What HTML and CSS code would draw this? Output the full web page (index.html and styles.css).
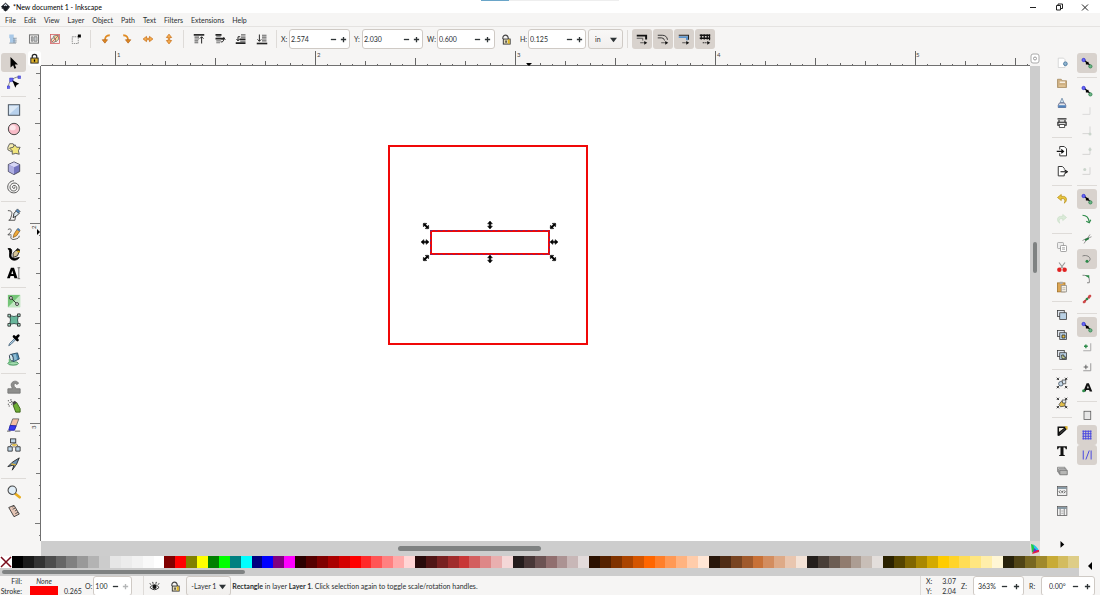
FILE: index.html
```html
<!DOCTYPE html>
<html lang="en">
<head>
<meta charset="utf-8">
<title>*New document 1 - Inkscape</title>
<link rel="stylesheet" href="styles.css">
</head>
<body>
<svg class="defs" aria-hidden="true">
  <symbol id="snap" viewBox="0 0 16 16"><path d="M4 4l9 8" stroke="#111" stroke-width="1.4"/><circle cx="3.500" cy="4" r="2.2" fill="#6a6af4" stroke="#2a2ad0"/><rect x="6.500" y="6.500" width="3.500" height="3.500" fill="#000"/><circle cx="12.500" cy="12.500" r="2.200" fill="#6fb58a" stroke="#2b8048"/></symbol>
  <symbol id="minus" viewBox="0 0 8 8"><path d="M1 4h6" stroke="#2e3436" stroke-width="1.500"/></symbol>
  <symbol id="plus" viewBox="0 0 8 8"><path d="M1 4h6M4 1v6" stroke="#2e3436" stroke-width="1.500"/></symbol>
  <symbol id="down" viewBox="0 0 8 8"><path d="M0 2h8L4 7z" fill="#2e3436"/></symbol>
  <symbol id="lock" viewBox="0 0 12 12"><path d="M2 5.500C1.500 2 4 .8 6 1.500s2 2 2 4" fill="none" stroke="#444" stroke-width="1.200"/><rect x="2.500" y="5.500" width="7.500" height="5.500" fill="#e4dcb8" stroke="#333"/><path d="M5.500 7v2.500" stroke="#222" stroke-width="1.400"/><path d="M8.500 6v4.500" stroke="#e3b71e" stroke-width="2"/></symbol>
  <symbol id="handle" viewBox="0 0 10 10"><path d="M0 5l3.500-3v2h3V2L10 5 6.500 8V6h-3v2z" fill="#000" stroke="#000" stroke-width=".6"/></symbol>
  <symbol id="copies" viewBox="0 0 16 16"><rect x="2" y="2" width="9" height="8" fill="#dfe5ec" stroke="#333"/><rect x="5" y="5" width="9" height="9" fill="#b9d0e4" stroke="#333"/></symbol>
  <symbol id="corners" viewBox="0 0 16 16"><path d="M1 4l3-3M1 1l3 3M12 1l3 3M15 1l-3 3M1 12l3 3M4 12l-3 3M12 12l3 3M15 12l-3 3" stroke="#222" stroke-width="1.200"/></symbol>
</svg>

<header class="titlebar">
  <svg class="logo" viewBox="0 0 12 12"><path d="M6 .5l5.500 5c.5.800-.8 1.300-2 1.500l1 .8-2 .7.500 1.200L6 11.500 3.500 10l.5-1.500L1 7.500l1-.7C.8 6.500 0 6 .6 5.400z" fill="#171b22" stroke="#171b22" stroke-width=".6"/><path d="M6 1.500L3.500 4l1.200 1L6 4l1.400 1L8.500 4z" fill="#d8e0ea"/></svg>
  <h1 class="title">*New document 1 - Inkscape</h1>
  <div class="progress"><span class="progress-value"></span></div>
  <div class="window-buttons">
    <button aria-label="Minimize"><svg viewBox="0 0 10 10"><path d="M2 5.500h6" stroke="#222"/></svg></button>
    <button aria-label="Restore"><svg viewBox="0 0 10 10"><path d="M2.500 3.500h4v4.500h-4zM4 3.500V2h4.500v4.500H6.500" fill="none" stroke="#222"/></svg></button>
    <button aria-label="Close"><svg viewBox="0 0 10 10"><path d="M2 2.500l6 6M8 2.500l-6 6" stroke="#222"/></svg></button>
  </div>
</header>

<nav class="menubar">
  <button>File</button><button>Edit</button><button>View</button><button>Layer</button><button>Object</button><button>Path</button><button>Text</button><button>Filters</button><button>Extensions</button><button>Help</button>
</nav>

<div class="toolbar">
  <div class="group">
    <button aria-label="Select all"><svg viewBox="0 0 16 16"><path d="M3 2h6v5H3zM4 7h7v6H4z" fill="#a9c9e8"/><path d="M8 7h5M8 9.500h5M8 12h5M3 13.500h9" stroke="#7b8794"/></svg></button>
    <button aria-label="Select all in all layers"><svg viewBox="0 0 16 16"><rect x="2" y="2.500" width="12" height="11" fill="none" stroke="#777" stroke-width="1.400"/><path d="M4.500 5h2v6h-2zM8 5h4v6H8z" fill="#c6cacd" stroke="#777"/></svg></button>
    <button aria-label="Deselect"><svg viewBox="0 0 16 16"><rect x="2" y="2" width="12" height="12" fill="#f9eeee" stroke="#d05a5a"/><path d="M6 4l6-1 1 5-4 4z" fill="#f0dfa0" stroke="#666"/><circle cx="6" cy="9.500" r="3" fill="#f3e3c0" stroke="#666"/><path d="M3 13L13 3" stroke="#c44"/></svg></button>
    <button aria-label="Toggle selection box"><svg viewBox="0 0 16 16"><path d="M3 5h8v9H3z" fill="none" stroke="#777" stroke-dasharray="2 1"/><path d="M10.500 2h4v4h-4z" fill="#000"/></svg></button>
  </div>
  <span class="rule"></span>
  <div class="group">
    <button aria-label="Rotate counter-clockwise"><svg viewBox="0 0 16 16"><path d="M13 3C8 3 6.500 6 6.500 11" fill="none" stroke="#e08a22" stroke-width="2.400"/><path d="M3 9h7l-3.500 4.500z" fill="#e08a22" stroke="#b5651d"/></svg></button>
    <button aria-label="Rotate clockwise"><svg viewBox="0 0 16 16"><path d="M3 3c5 0 6.500 3 6.500 8" fill="none" stroke="#e08a22" stroke-width="2.400"/><path d="M6 9h7l-3.500 4.500z" fill="#e08a22" stroke="#b5651d"/></svg></button>
    <button aria-label="Flip horizontal"><svg viewBox="0 0 16 16"><path d="M1.500 8L6 4.500V7h4V4.500L14.500 8 10 11.500V9H6v2.500z" fill="#f5ab4d" stroke="#c8701a"/></svg></button>
    <button aria-label="Flip vertical"><svg viewBox="0 0 16 16"><path d="M8 1.500L11.500 6H9v4h2.500L8 14.500 4.500 10H7V6H4.500z" fill="#f5ab4d" stroke="#c8701a"/></svg></button>
  </div>
  <span class="rule"></span>
  <div class="group">
    <button aria-label="Raise to top"><svg viewBox="0 0 16 16"><path d="M1 2.500h14" stroke="#222" stroke-width="2.200"/><path d="M2 5.500h6M2 8h6M2 10.500h5M2 13h5" stroke="#666" stroke-width="1.500"/><path d="M11.500 14V5M9 7.500L11.500 5 14 7.500" fill="none" stroke="#222" stroke-width="1.300"/></svg></button>
    <button aria-label="Raise"><svg viewBox="0 0 16 16"><path d="M2 2.500h8M2 7.500h12" stroke="#222" stroke-width="2.200"/><path d="M3 5h6M3 10.500h6M3 13h5" stroke="#777" stroke-width="1.500"/><path d="M9 12c3 0 4-1 4-5M10.500 9l2.500-3 2 3" fill="none" stroke="#222" stroke-width="1.300"/></svg></button>
    <button aria-label="Lower"><svg viewBox="0 0 16 16"><path d="M6 8.500h8M1 13.500h13" stroke="#222" stroke-width="2.200"/><path d="M8 2.500h6M8 5.500h6M7 11h7" stroke="#666" stroke-width="1.500"/><path d="M7 5H4v5M2 8l2 2.500L6 8" fill="none" stroke="#222" stroke-width="1.300"/></svg></button>
    <button aria-label="Lower to bottom"><svg viewBox="0 0 16 16"><path d="M1 14h14" stroke="#222" stroke-width="2.200"/><path d="M8 3h6M8 5.500h6M8 8h6M8 10.500h6" stroke="#666" stroke-width="1.500"/><path d="M4.500 2v9M2 8.500L4.500 11 7 8.500" fill="none" stroke="#222" stroke-width="1.300"/></svg></button>
  </div>
  <span class="rule"></span>
  <label class="field"><span>X:</span><span class="spin"><input type="text" value="2.574"><button aria-label="Decrease X"><svg><use href="#minus"/></svg></button><button aria-label="Increase X"><svg><use href="#plus"/></svg></button></span></label>
  <label class="field"><span>Y:</span><span class="spin"><input type="text" value="2.030"><button aria-label="Decrease Y"><svg><use href="#minus"/></svg></button><button aria-label="Increase Y"><svg><use href="#plus"/></svg></button></span></label>
  <label class="field size"><span>W:</span><span class="spin"><input type="text" value="0.600"><button aria-label="Decrease width"><svg><use href="#minus"/></svg></button><button aria-label="Increase width"><svg><use href="#plus"/></svg></button></span></label>
  <button class="lock-ratio" aria-label="Lock ratio"><svg><use href="#lock"/></svg></button>
  <label class="field size"><span>H:</span><span class="spin"><input type="text" value="0.125"><button aria-label="Decrease height"><svg><use href="#minus"/></svg></button><button aria-label="Increase height"><svg><use href="#plus"/></svg></button></span></label>
  <span class="select units"><select aria-label="Units"><option>in</option></select><svg><use href="#down"/></svg></span>
  <span class="rule"></span>
  <div class="group toggles">
    <button class="on" aria-label="Scale stroke width"><svg viewBox="0 0 16 16"><path d="M1 3.500h12.500v5" fill="none" stroke="#111" stroke-width="2.600"/><path d="M1 7h8v3" fill="none" stroke="#555" stroke-width="1.300"/><path d="M6 13h6" stroke="#111" stroke-width="1.400" stroke-dasharray="1.500 1"/><path d="M11 10.500l4 2.500-4 2.500z" fill="#111"/></svg></button>
    <button class="on" aria-label="Scale rounded corners"><svg viewBox="0 0 16 16"><path d="M1 3h6q6 0 7 6M1 6.500h5q3.500 0 4 3.500" fill="none" stroke="#333" stroke-width="1.300"/><path d="M6 13h6" stroke="#111" stroke-width="1.400" stroke-dasharray="1.500 1"/><path d="M11 10.500l4 2.500-4 2.500z" fill="#111"/></svg></button>
    <button class="on" aria-label="Move gradients"><svg viewBox="0 0 16 16"><path d="M1 3h13v6" fill="none" stroke="#222" stroke-width="1.400"/><path d="M1 5.500h11v4" fill="none" stroke="#5a93cc" stroke-width="2.600"/><path d="M6 13h6" stroke="#111" stroke-width="1.400" stroke-dasharray="1.500 1"/><path d="M11 10.500l4 2.500-4 2.500z" fill="#111"/></svg></button>
    <button class="on" aria-label="Move patterns"><svg viewBox="0 0 16 16"><path d="M1 3h14M1 7h14M3 1.500v7M7 1.500v7M11 1.500v7M14 1.500v8" stroke="#111" stroke-width="1.700"/><path d="M5 13h7" stroke="#111" stroke-width="1.400" stroke-dasharray="1.500 1"/><path d="M11 10.500l4 2.500-4 2.500z" fill="#111"/></svg></button>
  </div>
</div>

<main class="workspace">
  <aside class="toolbox">
    <button class="on" aria-label="Selector"><svg viewBox="0 0 16 16"><path d="M4 1v12l3-2.500 1.500 4 2-.8-1.600-3.900h3.600z" fill="#000"/></svg></button>
    <button aria-label="Node"><svg viewBox="0 0 16 16"><path d="M1.500 14C2 7 6 3 14 2" fill="none" stroke="#777"/><path d="M0 12.500h3v3H0zM12.500 1h3v3h-3zM3 3.500h4v4H3z" fill="#6464ee" stroke="#3232c8" stroke-width=".6"/><path d="M6 6l8 4-3 1.500-1.500 3z" fill="#000"/></svg></button>
    <hr>
    <button aria-label="Rectangle"><svg viewBox="0 0 16 16"><rect x="1.500" y="2" width="13" height="12" fill="#b7d0ec" stroke="#3d4650"/><path d="M2.500 13L13.500 3H2.500z" fill="#dbe8f6"/></svg></button>
    <button aria-label="Ellipse"><svg viewBox="0 0 16 16"><circle cx="8" cy="8" r="6.500" fill="#f8bcc8" stroke="#333"/><ellipse cx="6.500" cy="6.500" rx="3.500" ry="3" fill="#fde6ea"/></svg></button>
    <button aria-label="Star"><svg viewBox="0 0 16 16"><path d="M1 6l2-4 4 0 1 2-1 4 -2 3-4-2z" fill="#f6eeb2" stroke="#555"/><path d="M9 3l2 3 4 0-2 4 1 4-4-1-4 1 0-4-3-3 4-1z" fill="#f2e67c" stroke="#555"/></svg></button>
    <button aria-label="3D box"><svg viewBox="0 0 16 16"><path d="M8 1l6.500 3v8L8 15.500 1.500 12V4z" fill="#7474be" stroke="#445"/><path d="M2 4.500L8 7v8l-6-3.200z" fill="#b0b0e2"/><path d="M8 1.500l6 2.700L8 7 2 4.200z" fill="#d6d6f4"/></svg></button>
    <button aria-label="Spiral"><svg viewBox="0 0 16 16"><path d="M8 8.500c1-1 1.500 1 0 1.200C6 9.500 5.500 6.500 8 6.200c3 0 4 3 2.500 5-2 2.500-6.500 1.300-7-2.200C3 5 7 2.500 10.500 3.800 14.500 5.500 15 10.500 12 13.200 8.500 16.200 2.500 14.500 1 10 0 5.500 3 1 8 .8" fill="none" stroke="#555" stroke-width="1.100"/></svg></button>
    <hr>
    <button aria-label="Pen"><svg viewBox="0 0 16 16"><path d="M1 3c5 0 5 2 4 6-1 3-1 5-3 5h7l1-6" fill="none" stroke="#444"/><path d="M7 11l1-5 3-3 3 3-3 3z" fill="#dce8f0" stroke="#222"/><path d="M10 3l2-2 3 3-2 2z" fill="#5286b8" stroke="#222" stroke-width=".6"/></svg></button>
    <button aria-label="Pencil"><svg viewBox="0 0 16 16"><path d="M1 3c3-2 5 0 3 3L1 9h4M5 10c-2 3 1 5 4 4s5-1 5-4" fill="none" stroke="#444"/><path d="M7 12l1-4 4-6 3 2-4 6z" fill="#f0aa3a" stroke="#70430c" stroke-width=".7"/><path d="M11 3l2-2 2 2-1 2z" fill="#5282b5"/></svg></button>
    <button aria-label="Calligraphy"><svg viewBox="0 0 16 16"><path d="M1 2c4-1 5 1 4 5s0 6 4 6l5-1c-2 3-6 4-9 2S3 9 3 6 2 3 1 2z" fill="#000" stroke="#000"/><path d="M7 12V7l4-4 3 2-2 5z" fill="#d8c79a" stroke="#222"/><path d="M10 4l2-3 3 2-1 3z" fill="#202020"/><path d="M12 4.500l2.500 1.500" stroke="#e8b400" stroke-width="1.500"/></svg></button>
    <button aria-label="Text"><svg viewBox="0 0 16 16"><path d="M0 14L4.500 2h3.500l4 12H8.500l-.8-2.500H4L3.300 14zM5 9h2.200L6 5z" fill="#000"/><path d="M12 2h3M12 14.500h3M13.500 2v12.500" stroke="#666"/></svg></button>
    <hr>
    <button aria-label="Gradient"><svg viewBox="0 0 16 16"><rect x="1" y="1" width="14" height="14" fill="#75c578"/><path d="M1 15L15 1v14z" fill="#c1e7c2"/><path d="M5 5l6 6" stroke="#222"/><circle cx="4.500" cy="4.500" r="1.700" fill="#ddd" stroke="#333"/><circle cx="11.500" cy="11.500" r="1.700" fill="#ddd" stroke="#333"/></svg></button>
    <button aria-label="Mesh"><svg viewBox="0 0 16 16"><path d="M3 3q5 2 10 0-2 5 0 10-5-2-10 0 2-5 0-10z" fill="#69b79b" stroke="#274d44"/><path d="M1 1.500h3v3H1zM12 1h3v3h-3zM1 12h3v3H1zM12 12h3v3h-3z" fill="#9ed4c0" stroke="#333"/></svg></button>
    <button aria-label="Dropper"><svg viewBox="0 0 16 16"><path d="M9 6l-6 6-1 2.500L4.500 13l6-6" fill="#b9d7ec" stroke="#47637a"/><path d="M8 4l4 4M10 6l3-3" stroke="#000" stroke-width="3" stroke-linecap="round"/></svg></button>
    <button aria-label="Paint bucket"><svg viewBox="0 0 16 16"><ellipse cx="7" cy="13" rx="6" ry="2" fill="#a4dcb0" stroke="#3c8b55"/><path d="M5 2.500l7-1.500 2 7-7 3z" fill="#4f8db3" stroke="#24475e"/><path d="M7 3l3-.700 1.500 6L8.500 10z" fill="#8fbcd2"/><ellipse cx="5" cy="6.500" rx="2" ry="4" fill="#d5eaf0" stroke="#345" transform="rotate(-15 5 6.500)"/><path d="M3 8v5" stroke="#6abf7d" stroke-width="2"/></svg></button>
    <hr>
    <button aria-label="Tweak"><svg viewBox="0 0 16 16"><path d="M1 10h5c0-2-2-3-1-6 2-4 8-3 8 0l-2 1c-1-2-3-1-3 1s2 3 3 4h4v5H1z" fill="#8e8e8c" stroke="#777"/></svg></button>
    <button aria-label="Spray"><svg viewBox="0 0 16 16"><path d="M1 2h1M3 4h1M1 6h1M4 1h1M5 6h1M2 8h1M5 3h1" stroke="#222" stroke-width="1.300"/><path d="M7 7l4-3 4 7v4h-5z" fill="#6fae36" stroke="#375f15"/><path d="M6 4l3-2 2 2-4 3z" fill="#444"/></svg></button>
    <button aria-label="Eraser"><svg viewBox="0 0 16 16"><path d="M6.500 1h7l-3 8h-7z" fill="#f6bfa2" stroke="#666"/><path d="M3.500 8.500l7 .5-2 5H2z" fill="#3939ee" stroke="#2020aa"/><path d="M0 15h4M9 15h6" stroke="#555"/></svg></button>
    <button aria-label="Connector"><svg viewBox="0 0 16 16"><path d="M8 6v5M3 10l2-3h6l2 3" fill="none" stroke="#555"/><rect x="4" y="1" width="6" height="4.500" fill="#bdd4e8" stroke="#333"/><path d="M1 10h5v5H1zM10 10h5v5h-5z" fill="#bdd4e8" stroke="#333"/><path d="M6 7h5v2H6z" fill="#e9c750"/></svg></button>
    <button aria-label="LPE"><svg viewBox="0 0 16 16"><path d="M1 11l5-5 8-5-3 7-5 7 2-6z" fill="#6d93b4" stroke="#222"/><path d="M5 8l5 1" stroke="#d7ae3a" stroke-width="1.500"/></svg></button>
    <hr>
    <button aria-label="Zoom"><svg viewBox="0 0 16 16"><path d="M9.500 10l5 4" stroke="#e8ad1f" stroke-width="3" stroke-linecap="round"/><circle cx="6" cy="6" r="4.800" fill="#e0edf7" stroke="#444" stroke-width="1.200"/></svg></button>
    <button aria-label="Measure"><svg viewBox="0 0 16 16"><path d="M2 4l6-2.500 6 10-6 3z" fill="#e6c6b6" stroke="#333"/><path d="M8 2l-2 1.500M9.500 4.500l-3 1.500M11 7l-2 1M12.500 9.500l-3 1.500" stroke="#444"/></svg></button>
  </aside>

  <section class="canvas-area">
    <button class="guide-lock" aria-label="Lock guides"><svg viewBox="0 0 12 12"><path d="M3.500 6V4a2.500 2.500 0 0 1 5 0v2" fill="none" stroke="#222" stroke-width="1.300"/><rect x="2" y="5.500" width="8" height="5.500" fill="#e0b32c" stroke="#222"/><path d="M6 7v2.500" stroke="#000" stroke-width="1.500"/></svg></button>
    <svg class="ruler-h">
      <defs><pattern id="inch-h" x="74" width="200" height="15" patternUnits="userSpaceOnUse"><path d="M.5 0v14M100.500 7v7M50.500 10v4M150.500 10v4M25.500 12v2M75.500 12v2M125.500 12v2M175.500 12v2M12.500 13v1M37.500 13v1M62.500 13v1M87.500 13v1M112.500 13v1M137.500 13v1M162.500 13v1M187.500 13v1" stroke="#666"/></pattern></defs>
      <rect width="100%" height="15" fill="url(#inch-h)"/><path d="M0 14h2000v1H0z" fill="#707070"/>
      <text x="76" y="6">1</text><text x="276" y="6">2</text><text x="476" y="6">3</text><text x="676" y="6">4</text><text x="875" y="6">5</text>
      <path d="M485 12h6l-3 3z" fill="#000"/>
    </svg>
    <button class="cms" aria-label="Zoom to page"><svg viewBox="0 0 10 12"><rect x="1" y="1" width="8" height="9" rx="2" fill="#fff" stroke="#aaa"/><circle cx="5" cy="5.500" r="1.500" fill="none" stroke="#999"/></svg></button>
    <svg class="ruler-v">
      <defs><pattern id="inch-v" y="157" width="13" height="200" patternUnits="userSpaceOnUse"><path d="M2 .5h10M7 100.500h5M8 50.500h4M8 150.500h4M10 25.500h2M10 75.500h2M10 125.500h2M10 175.500h2M11 12.500h1M11 37.500h1M11 62.500h1M11 87.500h1M11 112.500h1M11 137.500h1M11 162.500h1M11 187.500h1" stroke="#777"/></pattern></defs>
      <rect width="13" height="100%" fill="url(#inch-v)"/><path d="M12 0h1v2000h-1z" fill="#707070"/>
      <text transform="translate(8 163) rotate(-90)">2</text><text transform="translate(8 363) rotate(-90)">3</text>
      <path d="M9 163v6l3-3z" fill="#000"/>
    </svg>
    <svg class="page">
      <g fill="none" stroke="#f00808" stroke-width="2"><rect x="348" y="80" width="198" height="198"/><rect x="390" y="165" width="118" height="23"/></g>
      <rect x="389.500" y="164.500" width="119" height="24" fill="none" stroke="#6a2a80" stroke-dasharray="2 3"/>
      <g>
        <use href="#handle" x="-4" y="-4" width="8" height="8" transform="translate(385 160) rotate(45)"/>
        <use href="#handle" x="-4" y="-4" width="8" height="8" transform="translate(449 159) rotate(90)"/>
        <use href="#handle" x="-4" y="-4" width="8" height="8" transform="translate(512 160) rotate(-45)"/>
        <use href="#handle" x="-4" y="-4" width="8" height="8" transform="translate(384 176)"/>
        <use href="#handle" x="-4" y="-4" width="8" height="8" transform="translate(513 176)"/>
        <use href="#handle" x="-4" y="-4" width="8" height="8" transform="translate(385 192) rotate(-45)"/>
        <use href="#handle" x="-4" y="-4" width="8" height="8" transform="translate(449 193) rotate(90)"/>
        <use href="#handle" x="-4" y="-4" width="8" height="8" transform="translate(512 192) rotate(45)"/>
      </g>
    </svg>
    <div class="scroll-v"><span class="thumb"></span></div>
    <div class="scroll-h"><span class="thumb"></span></div>
    <button class="color-managed" aria-label="Color management"><svg viewBox="0 0 10 12"><path d="M1 1l3 1 1 5-3 3z" fill="#20c840"/><path d="M3 1.500q3 1 6 6L5 7z" fill="#20c6e8"/><path d="M9 7v2l-7 2 2-4z" fill="#e01c48"/><path d="M4 5l3 2.500L3.500 9z" fill="#5533dd"/></svg></button>
  </section>

  <aside class="side commands">
    <button aria-label="New"><svg viewBox="0 0 16 16"><path d="M3 1.500h7l2 2V14H3z" fill="#fff" stroke="#ccc"/><circle cx="12.500" cy="9" r="2.500" fill="#8fb4cf" stroke="#3a6a94"/></svg></button>
    <button aria-label="Open"><svg viewBox="0 0 16 16"><path d="M2 3h5l1 2h6v9H2z" fill="#cfb184" stroke="#a4885c"/><path d="M5 6h7v2H5z" fill="#f5eee2"/><path d="M4 11h8v2H4z" fill="#e3c797"/></svg></button>
    <button aria-label="Save"><svg viewBox="0 0 16 16"><path d="M8 1.500l2.500 6h-5z" fill="#d9e8f4" stroke="#6484a4"/><path d="M4.500 8h7l1.500 3v3H3v-3z" fill="#e2e7ed" stroke="#557"/><path d="M3 11h10v3H3z" fill="#4f83bd"/></svg></button>
    <button aria-label="Print"><svg viewBox="0 0 16 16"><path d="M2 2.500h12M4 4v3h8V4M2.500 7h11v4h-11z" fill="#ddd" stroke="#222" stroke-width="1.500"/><path d="M4.500 10h7v4h-7z" fill="#fff" stroke="#222"/></svg></button>
    <hr>
    <button aria-label="Import"><svg viewBox="0 0 16 16"><path d="M5 6V2h6l3 3v9.500H5V11" fill="#fff" stroke="#333" stroke-width="1.300"/><path d="M1 8.500h8M7 6l3 2.500L7 11" fill="none" stroke="#111" stroke-width="1.600"/></svg></button>
    <button aria-label="Export"><svg viewBox="0 0 16 16"><path d="M11 6V4.500L8.500 2H3v12.500h8V12" fill="#fff" stroke="#333" stroke-width="1.300"/><path d="M6 9h7M11.500 6.500L15 9l-3.500 2.500" fill="none" stroke="#111" stroke-width="1.600"/></svg></button>
    <hr>
    <button aria-label="Undo"><svg viewBox="0 0 16 16"><path d="M2 6l5-4v2.500h3c5 0 5 7 1 9 2-4 0-6-2-6H7V10z" fill="#e9c53c" stroke="#b68f16"/></svg></button>
    <button class="faded" aria-label="Redo"><svg viewBox="0 0 16 16"><path d="M14 6L9 2v2.500H6c-5 0-5 7-1 9-2-4 0-6 2-6h2V10z" fill="#a9d8a5" stroke="#7bb878"/></svg></button>
    <hr>
    <button aria-label="Copy"><svg viewBox="0 0 16 16"><rect x="2" y="2" width="8" height="8" rx="1" fill="#eee" stroke="#999"/><rect x="6" y="6" width="8" height="8" rx="1" fill="#fff" stroke="#888"/><path d="M8 9h4M8 11h4" stroke="#999"/></svg></button>
    <button aria-label="Cut"><svg viewBox="0 0 16 16"><path d="M4 2l6 8M12 2l-6 8" stroke="#999" stroke-width="1.500"/><circle cx="4.500" cy="11.500" r="3" fill="#e02222"/><circle cx="11.500" cy="11.500" r="3" fill="#e02222"/></svg></button>
    <button aria-label="Paste"><svg viewBox="0 0 16 16"><rect x="2" y="2.500" width="10" height="12" fill="#dca552" stroke="#9c6c22"/><rect x="5" y="1" width="4" height="3" fill="#aaa"/><path d="M7 6h7v8.500H7z" fill="#f7f1e4" stroke="#888"/><path d="M8.500 9h4M8.500 11.500h4" stroke="#aaa"/></svg></button>
    <hr>
    <button aria-label="Duplicate"><svg><use href="#copies"/></svg></button>
    <button aria-label="Clone"><svg viewBox="0 0 16 16"><use href="#copies"/><path d="M8 8h4v4H8z" fill="#e7c347" stroke="#222"/></svg></button>
    <button aria-label="Unlink clone"><svg viewBox="0 0 16 16"><use href="#copies"/><path d="M7.500 8h3v2.500h2V13H8z" fill="#cfdc9e" stroke="#222"/></svg></button>
    <hr>
    <button aria-label="Group"><svg viewBox="0 0 16 16"><use href="#corners"/><circle cx="6.500" cy="9" r="3" fill="#c7daea" stroke="#345"/><path d="M8 4h5v5H9z" fill="#d8e4ee" stroke="#444"/></svg></button>
    <button aria-label="Ungroup"><svg viewBox="0 0 16 16"><use href="#corners"/><path d="M4 10l3-4 5 1v5l-6 1z" fill="#e2bf4a" stroke="#444"/><path d="M8 4h5v4H9z" fill="#e8eef2" stroke="#444"/></svg></button>
    <hr>
    <button aria-label="Fill and stroke"><svg viewBox="0 0 16 16"><path d="M2 2h12v4L5 14H2z" fill="#111"/><path d="M4 4h7l-4 5H4z" fill="#ece9df"/><path d="M3 14l2-5 8-6 1 2-7 7z" fill="#333" stroke="#000"/><path d="M12 2.500h2.500V6" stroke="#e5b92d" stroke-width="2" fill="none"/></svg></button>
    <button aria-label="Text and font"><svg viewBox="0 0 16 16"><path d="M1.500 1.500h13v4h-1.500c-.5-2-1-2.200-3-2.200V12c0 1.500.5 1.500 2 1.700v1H4v-1C5.500 13.500 6 13.500 6 12V3.300c-2 0-2.500.2-3 2.200H1.500z" fill="#111"/></svg></button>
    <button aria-label="Layers"><svg viewBox="0 0 16 16"><path d="M2 3h10v6H2z" fill="#ddd" stroke="#777"/><path d="M3.500 5h10v6h-10z" fill="#ccc" stroke="#777"/><path d="M5 7h10v6H5z" fill="#b7b7b5" stroke="#666"/></svg></button>
    <button aria-label="XML editor"><svg viewBox="0 0 16 16"><rect x="2" y="2" width="12.500" height="12" fill="#f1f1f1" stroke="#555"/><path d="M2 4h12" stroke="#667c8b" stroke-width="2"/><path d="M6 7L4 9l2 2M10.500 7l2 2-2 2" fill="none" stroke="#333"/><circle cx="8.300" cy="9" r="1.500" fill="#777"/></svg></button>
    <button aria-label="Align"><svg viewBox="0 0 16 16"><rect x="2" y="2" width="12.500" height="12" fill="#f1f1f1" stroke="#555"/><path d="M2 4h12" stroke="#667c8b" stroke-width="2"/><path d="M5.500 5v9M11 5v9" stroke="#666"/><path d="M7 8h3M7 11h3" stroke="#999"/></svg></button>
    <button class="more" aria-label="More commands"><svg viewBox="0 0 16 16"><path d="M6 4l5 4.500L6 13z" fill="#000"/></svg></button>
  </aside>

  <aside class="side snaps">
    <button class="on" aria-label="Snap"><svg><use href="#snap"/></svg></button>
    <hr>
    <button aria-label="Snap bounding boxes"><svg><use href="#snap"/></svg></button>
    <button class="faded" aria-label="Snap edges"><svg viewBox="0 0 16 16"><path d="M2 12.500h10V3" fill="none" stroke="#aaa" stroke-width="1.300"/></svg></button>
    <button class="faded" aria-label="Snap corners"><svg viewBox="0 0 16 16"><path d="M2 11.500h10V2" fill="none" stroke="#999" stroke-width="1.300"/><circle cx="12" cy="12" r="2" fill="#7b9a82"/></svg></button>
    <button class="faded" aria-label="Snap edge midpoints"><svg viewBox="0 0 16 16"><path d="M2 12.500h10V3" fill="none" stroke="#999" stroke-width="1.300"/><circle cx="12" cy="6" r="2" fill="#7b9a82"/></svg></button>
    <button class="faded" aria-label="Snap box centers"><svg viewBox="0 0 16 16"><path d="M2 12.500h10V3" fill="none" stroke="#999" stroke-width="1.300"/><circle cx="5" cy="6" r="2" fill="#7b9a82"/></svg></button>
    <hr>
    <button class="on" aria-label="Snap nodes"><svg><use href="#snap"/></svg></button>
    <button aria-label="Snap to paths"><svg viewBox="0 0 16 16"><path d="M2 3c5 0 8 2 9 9" fill="none" stroke="#2c8a48" stroke-width="1.600"/><path d="M7 11l4 2 2-4" fill="none" stroke="#2c8a48" stroke-width="1.600"/></svg></button>
    <button aria-label="Snap intersections"><svg viewBox="0 0 16 16"><path d="M2 10c5-3 8-3 12-5M4 14l8-12" fill="none" stroke="#777"/><path d="M5.500 9.500l5-2.500" stroke="#257a3e" stroke-width="2.500"/></svg></button>
    <button class="on" aria-label="Snap cusp nodes"><svg viewBox="0 0 16 16"><path d="M2 4c5-2 11 1 10 5-1 3-3 3-4 3" fill="none" stroke="#666"/><circle cx="8" cy="11" r="2" fill="#2c8a48"/></svg></button>
    <button aria-label="Snap smooth nodes"><svg viewBox="0 0 16 16"><path d="M2 3c7 0 10 2 9 10h-3" fill="none" stroke="#666"/><path d="M5 3h6v4z" fill="#2c8a48"/></svg></button>
    <button aria-label="Snap line midpoints"><svg viewBox="0 0 16 16"><path d="M3 13L13 3" stroke="#933" stroke-width="2"/><path d="M2 12l3-3 2 3-3 2zM9 4l3-2 2 2-3 4z" fill="#d24a4a"/><circle cx="8" cy="8" r="1.800" fill="#2c8a48"/></svg></button>
    <hr>
    <button class="on" aria-label="Snap other points"><svg><use href="#snap"/></svg></button>
    <button aria-label="Snap object centers"><svg viewBox="0 0 16 16"><path d="M3 13h10V3" fill="none" stroke="#aaa" stroke-width="1.300"/><path d="M4 7h5M6.500 4.500v5" stroke="#2c8a48" stroke-width="1.800"/></svg></button>
    <button aria-label="Snap rotation centers"><svg viewBox="0 0 16 16"><path d="M3 13h10V3" fill="none" stroke="#999" stroke-width="1.300"/><path d="M3.500 8h6M6.500 5v6" stroke="#555" stroke-width="1.200"/></svg></button>
    <button aria-label="Snap text baselines"><svg viewBox="0 0 16 16"><path d="M3 14L7.500 3h3L15 14h-3.500l-.6-2H7l-.7 2zM8 9.500h2.500L9.200 6z" fill="#111"/><circle cx="3.500" cy="13" r="2" fill="#2c8a48"/></svg></button>
    <hr>
    <button aria-label="Snap page border"><svg viewBox="0 0 16 16"><rect x="4" y="3" width="9" height="11" fill="#e6e6e6" stroke="#555"/></svg></button>
    <button class="on" aria-label="Snap grids"><svg viewBox="0 0 16 16"><path d="M3 2v12M6.300 2v12M9.700 2v12M13 2v12M2 3h12M2 6.300h12M2 9.700h12M2 13h12" stroke="#4848e0" stroke-width="1.300"/></svg></button>
    <button class="on" aria-label="Snap guides"><svg viewBox="0 0 16 16"><path d="M3 2v12M6.500 14L11 2M13.500 2v12" stroke="#4848e0" stroke-width="1.300"/></svg></button>
  </aside>
</main>

<section class="palette-row">
  <div class="palette-scroll">
    <div class="palette" id="palette">
      <button class="none" aria-label="No color"><svg viewBox="0 0 12 12"><path d="M1 1l10 10M11 1L1 11" stroke="#7a0c1c" stroke-width="1.500"/></svg></button>
    </div>
    <div class="palette-track"><span class="thumb"></span></div>
  </div>
  <button class="palette-menu" aria-label="Palette menu"><svg viewBox="0 0 8 8"><path d="M6 0v8L2 4z" fill="#000"/></svg></button>
</section>

<footer class="status">
  <div class="style-box">
    <span class="key">Fill:</span><em>None</em><span></span>
    <span class="key">Stroke:</span><span class="stroke-swatch"></span><span>0.265</span>
  </div>
  <label class="field opacity"><span>O:</span><span class="spin"><input type="text" value="100"><button aria-label="Decrease opacity"><svg><use href="#minus"/></svg></button><button class="faded" aria-label="Increase opacity"><svg><use href="#plus"/></svg></button></span></label>
  <span class="rule"></span>
  <button class="status-icon" aria-label="Toggle layer visibility"><svg viewBox="0 0 12 12"><path d="M1 7q5-6 10 0-5 5-10 0z" fill="#fff" stroke="#222"/><circle cx="6" cy="6.500" r="2.300" fill="#111"/><path d="M2 4L1 2.500M4.500 3L4 1M7.500 3L8 1M10 4l1-1.500" stroke="#222"/></svg></button>
  <button class="status-icon" aria-label="Lock layer"><svg><use href="#lock"/></svg></button>
  <span class="select layer"><select aria-label="Current layer"><option>-Layer 1</option></select><svg><use href="#down"/></svg></span>
  <p class="message"><b>Rectangle</b> in layer <b>Layer 1</b>. Click selection again to toggle scale/rotation handles.</p>
  <span class="rule"></span>
  <dl class="coords"><dt>X:</dt><dd>3.07</dd><dt>Y:</dt><dd>2.04</dd></dl>
  <label class="field zoom"><span>Z:</span><span class="spin"><input type="text" value="363%"><button aria-label="Zoom out"><svg><use href="#minus"/></svg></button><button aria-label="Zoom in"><svg><use href="#plus"/></svg></button></span></label>
  <label class="field rotation"><span>R:</span><span class="spin"><input type="text" value="0.00°"><button aria-label="Rotate left"><svg><use href="#minus"/></svg></button><button aria-label="Rotate right"><svg><use href="#plus"/></svg></button></span></label>
</footer>
<script src="palette.js"></script>
</body>
</html>
```
FILE: styles.css
```css
* { box-sizing: border-box; }

:root {
  --bg: #f6f5f4;
  --line: #dedbd8;
  --border: #cfcac5;
  --pressed: #d8d2cd;
  --trough: #cdcdcd;
  --text: #2a2e30;
}

body {
  margin: 0;
  height: 100vh;
  display: flex;
  flex-direction: column;
  overflow: hidden;
  background: var(--bg);
  color: var(--text);
  font: 7px/10px Lato, "Open Sans", sans-serif;
}

button, input, select {
  margin: 0;
  padding: 0;
  border: 0;
  background: none;
  color: inherit;
  font: inherit;
}

svg { display: block; }
.defs { width: 0; height: 0; position: absolute; }
.faded { opacity: 0.35; }

.titlebar {
  flex: none;
  display: flex;
  align-items: center;
  height: 13px;
  padding-left: 1px;
  background: #fff;
  position: relative;
}
.logo { width: 9px; height: 10px; }
.title { margin: 0 auto 0 3px; font-size: 7px; font-weight: 400; color: #000; }
.progress { position: absolute; top: 0; left: 481px; width: 138px; height: 1px; background: #eee; }
.progress-value { display: block; width: 28px; height: 1px; background: #6aa5c8; }
.window-buttons { display: flex; padding-right: 2px; }
.window-buttons button { width: 26px; display: grid; place-items: center; }
.window-buttons svg { width: 10px; height: 10px; }

.menubar {
  flex: none;
  display: flex;
  gap: 8px;
  height: 14px;
  padding-left: 5px;
  border-bottom: 1px solid #e5e3e1;
}

.toolbar {
  flex: none;
  display: flex;
  align-items: center;
  height: 24px;
  padding-left: 2px;
}
.group { display: flex; }
.group button { width: 21px; height: 20px; display: grid; place-items: center; }
.group svg { width: 12px; height: 12px; }
.rule { flex: none; width: 1px; height: 18px; margin: 0 4px; background: var(--line); }
.toggles { gap: 1px; }
.toggles button { width: 20px; }
.on { background: var(--pressed); border-radius: 3px; }

.field { display: flex; align-items: center; gap: 1px; margin-right: 4px; }
.field > span:first-child { min-width: 7px; }
.spin {
  display: flex;
  align-items: center;
  height: 20px;
  padding-right: 1px;
  background: #fff;
  border: 1px solid var(--border);
  border-radius: 3px;
}
.spin input { width: 38px; padding-left: 1px; }
.size .spin input { width: 35px; }
.spin button { width: 10px; display: grid; place-items: center; }
.spin svg { width: 7px; height: 7px; }
.lock-ratio { width: 16px; margin-right: 5px; display: grid; place-items: center; }
.lock-ratio svg { width: 11px; height: 11px; }

.select { display: grid; align-items: center; }
.select > * { grid-area: 1 / 1; }
.select select {
  width: 100%;
  height: 20px;
  padding-left: 6px;
  appearance: none;
  border: 1px solid var(--border);
  border-radius: 3px;
  background: linear-gradient(#f9f8f7, #f1efed);
}
.select svg { width: 7px; height: 7px; justify-self: end; margin-right: 6px; pointer-events: none; }
.units { width: 35px; margin-left: -2px; }

.workspace { flex: 1; min-height: 0; display: flex; }

.toolbox {
  width: 28px;
  padding: 2px 2px 35px 1px;
  display: flex;
  flex-direction: column;
}
.toolbox button { flex: 1; min-height: 0; display: grid; place-items: center; }
.toolbox svg { width: 14px; height: 14px; }
hr { width: 100%; height: 1px; margin: 4px 0 3px; border: 0; background: var(--line); }

.canvas-area {
  flex: 1;
  min-width: 0;
  display: grid;
  grid-template: 15px 1fr 15px / 13px 1fr 10px;
}
.guide-lock { background: #fff; border-radius: 3px; padding: 2px 1px; }
.ruler-h { width: 100%; height: 15px; }
.ruler-v { width: 13px; height: 100%; }
.ruler-h text, .ruler-v text { font-size: 6px; fill: #444; }
.page { width: 100%; height: 100%; background: #fff; }
.scroll-v { background: var(--trough); padding: 176px 3px 0; }
.scroll-h { grid-column: 2; background: var(--trough); padding: 5px 0 0 357px; }
.thumb { display: block; border-radius: 3px; background: #7f8282; }
.scroll-v .thumb { height: 31px; }
.scroll-h .thumb { width: 143px; height: 5px; }
.cms, .color-managed { display: grid; place-items: center; }
.color-managed { background: #dedad6; }
.cms svg, .color-managed svg { width: 10px; height: 12px; }

.side { display: flex; flex-direction: column; padding-top: 2px; }
.side button { flex: none; height: 20px; display: grid; place-items: center; }
.side svg { width: 12px; height: 12px; }
.commands { width: 20px; margin: 0 5px 0 12px; }
.snaps { width: 20px; margin-right: 3px; }
.commands .more { margin-top: 13px; }

.palette-row { flex: none; display: flex; height: 20px; }
.palette-scroll { flex: 1; display: flex; flex-direction: column; background: var(--trough); }
.palette { display: flex; height: 12px; }
.palette button { flex: 1; }
.palette .none { flex: none; width: 12px; background: #fff; }
.palette-track { padding: 2px; }
.palette-track .thumb { width: 243px; height: 4px; }
.palette-menu { width: 21px; display: grid; place-items: center; }
.palette-menu svg { width: 8px; height: 8px; }

.status { flex: none; display: flex; align-items: flex-start; height: 19px; overflow: hidden; }
.style-box {
  display: grid;
  grid-template-columns: 22px 28px 18px;
  column-gap: 8px;
  width: 85px;
  white-space: nowrap;
}
.key { text-align: right; }
.style-box em { text-align: center; }
.stroke-swatch { background: #f00; }
.style-box span:last-child { margin-left: -2px; }
.field.opacity { margin-right: 11px; }
.opacity .spin input { width: 16px; }
.status .rule { margin: 0; height: 19px; }
.status-icon { width: 21px; height: 20px; display: grid; place-items: center; }
.status-icon svg { width: 11px; height: 11px; }
.layer { width: 45px; margin-right: 1px; }
.layer select { padding-left: 4px; }
.layer svg { margin-right: 5px; }
.message { flex: 1; min-width: 0; margin: 5px 0 0; white-space: nowrap; }
.coords { display: grid; grid-template-columns: 12px 18px; margin: 0; padding: 0 5px; }
.coords dd { margin: 0; text-align: right; }
.status .zoom, .status .rotation { margin-right: 5px; }
.zoom > span:first-child, .rotation > span:first-child { min-width: 11px; }
.zoom .spin input { width: 24px; padding-left: 4px; }
.rotation .spin input { width: 27px; padding-left: 7px; }
.zoom .spin button, .rotation .spin button { width: 12px; }
```
FILE: palette.js
```js
const swatches = `
000000 1a1a1a 333333 4d4d4d 666666 808080 999999 b3b3b3 cccccc e6e6e6 ececec f2f2f2 f9f9f9 ffffff
800000 ff0000 808000 ffff00 008000 00ff00 008080 00ffff 000080 0000ff 800080 ff00ff
2b0000 550000 800000 aa0000 d40000 ff0000 ff2a2a ff5555 ff8080 ffaaaa ffd5d5
280b0b 501616 782121 a02c2c c83737 d35f5f de8787 e9afaf f4d7d7
241c1c 483737 6c5353 916f6f ac9393 c8b7b7 e3dbdb
2b1100 552200 803300 aa4400 d45500 ff6600 ff7f2a ff9955 ffb380 ffccaa ffe6d5
28170b 502d16 784421 a05a2c c87137 d38d5f deaa87 e9c6af f4e3d7
241f1c 483e37 6c5d53 917c6f ac9d93 c8beb7 e3dedb
2b2200 554400 806600 aa8800 d4aa00 ffcc00 ffd42a ffdd55 ffe680 ffeeaa fff6d5
28220b 504416 786721 a0892c c8ab37 d3bc5f decd87`.trim().split(/\s+/);

const palette = document.getElementById("palette");
for (const hex of swatches) {
  const button = document.createElement("button");
  button.style.background = "#" + hex;
  button.setAttribute("aria-label", "#" + hex);
  palette.append(button);
}
```
